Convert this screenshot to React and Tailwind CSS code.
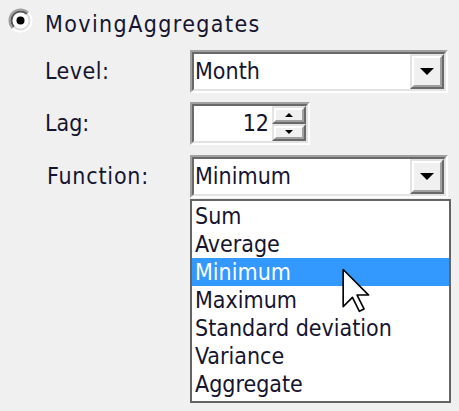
import React from "react";

const font = { fontFamily: '"DejaVu Sans Condensed", "DejaVu Sans", sans-serif' };

function Radio() {
  return (
    <svg width="25" height="25" viewBox="0 0 25 25">
      <circle cx="12.5" cy="12.5" r="11" fill="#fff" />
      <path d="M4.7 20.3 A11 11 0 0 1 20.3 4.7" fill="none" stroke="#a0a0a0" strokeWidth="2" />
      <path d="M20.3 4.7 A11 11 0 0 1 4.7 20.3" fill="none" stroke="#ffffff" strokeWidth="2" />
      <path d="M6.1 18.9 A9 9 0 0 1 18.9 6.1" fill="none" stroke="#555" strokeWidth="2" />
      <path d="M18.9 6.1 A9 9 0 0 1 6.1 18.9" fill="none" stroke="#dcdcdc" strokeWidth="2" />
      <circle cx="12.5" cy="12.5" r="4" fill="#000" />
    </svg>
  );
}

function Sunken({ children, className = "" }) {
  return (
    <div className={"border-2 border-t-[#a0a0a0] border-l-[#a0a0a0] border-b-[#ffffff] border-r-[#ffffff] " + className}>
      <div className="h-full border-2 border-t-[#696969] border-l-[#696969] border-b-[#e3e3e3] border-r-[#e3e3e3] bg-white flex items-stretch">
        {children}
      </div>
    </div>
  );
}

function Raised({ children, className = "" }) {
  return (
    <div className={"border-2 border-t-[#e3e3e3] border-l-[#e3e3e3] border-b-[#696969] border-r-[#696969] bg-[#f0f0f0] " + className}>
      <div className="h-full border-2 border-t-[#ffffff] border-l-[#ffffff] border-b-[#a0a0a0] border-r-[#a0a0a0] flex items-center justify-center">
        {children}
      </div>
    </div>
  );
}

function Combo({ value }) {
  return (
    <Sunken className="w-[258px] h-[43px]">
      <div className="flex-1 flex items-center pl-[1px] text-[23px] leading-none text-[#151530]">{value}</div>
      <Raised className="w-[34px] h-full">
        <svg width="14" height="8" viewBox="0 0 14 8">
          <path d="M0 0 H14 L7 7 Z" fill="#000" />
        </svg>
      </Raised>
    </Sunken>
  );
}

function Spinner() {
  return (
    <Sunken className="w-[120px] h-[43px]">
      <div className="flex-1 flex items-center justify-end pr-[3px] text-[23px] leading-none text-[#151530]">12</div>
      <div className="w-[34px] flex flex-col">
        <Raised className="h-1/2">
          <svg width="8" height="4" viewBox="0 0 8 4"><path d="M0 4 H8 L4 0 Z" fill="#000" /></svg>
        </Raised>
        <Raised className="h-1/2">
          <svg width="8" height="4" viewBox="0 0 8 4"><path d="M0 0 H8 L4 4 Z" fill="#000" /></svg>
        </Raised>
      </div>
    </Sunken>
  );
}

const items = ["Sum", "Average", "Minimum", "Maximum", "Standard deviation", "Variance", "Aggregate"];

export default function App() {
  return (
    <div style={font} className="relative w-[459px] h-[411px] bg-[#f0f0f0] overflow-hidden text-[#151530]">
      <div className="flex items-center pt-[8px] pl-[8px] h-[33px]">
        <Radio />
        <span className="ml-[12px] text-[23px] leading-none tracking-[1.4px] translate-y-[4px]">MovingAggregates</span>
      </div>
      <div className="grid grid-cols-[145px_1fr] pl-[45px] mt-[17px] items-center">
        <span className="text-[23px] leading-none tracking-[0.5px]">Level:</span>
        <Combo value="Month" />
        <span className="text-[23px] leading-none mt-[9px]">Lag:</span>
        <div className="mt-[9px]"><Spinner /></div>
        <span className="text-[23px] leading-none mt-[10px] pl-[2px] tracking-[0.8px]">Function:</span>
        <div className="relative mt-[10px]">
          <Combo value="Minimum" />
          <div className="absolute left-0 top-[44px] w-[261px] h-[204px] border-2 border-[#646464] bg-white pt-[1px]">
            {items.map((it) => (
              <div
                key={it}
                className={
                  "h-[28px] flex items-center pl-[3px] text-[23px] leading-none " +
                  (it === "Minimum" ? "bg-[#3399ff] text-white" : "text-[#151530]")
                }
              >
                {it}
              </div>
            ))}
          </div>
        </div>
      </div>
      <svg className="absolute left-[342px] top-[268px]" width="29" height="46" viewBox="0 0 12.5 19.5">
        <path d="M0.5 0.5 L0.5 16.5 L4.5 12.5 L7.5 18.5 L9.5 17.5 L6.5 11.5 L11.5 11.5 Z" fill="#fff" stroke="#000" strokeWidth="0.7" strokeLinejoin="round" />
      </svg>
    </div>
  );
}
